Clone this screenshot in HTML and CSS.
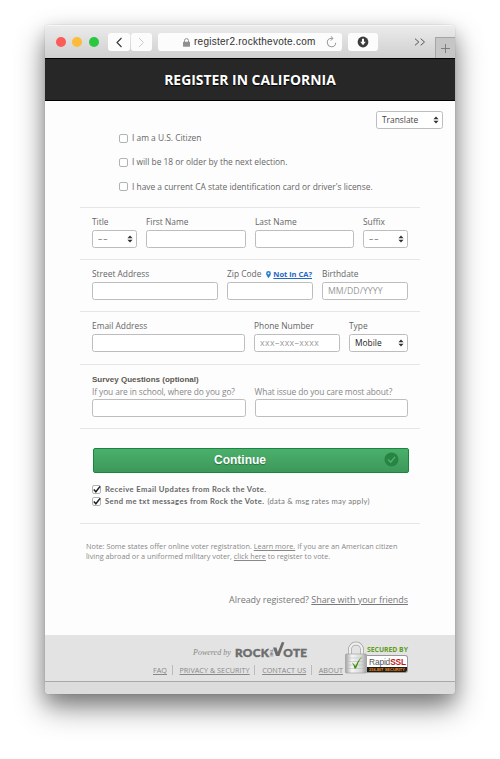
FILE: index.html
```html
<!DOCTYPE html>
<html lang="en">
<head>
<meta charset="utf-8">
<title>Register in California</title>
<link rel="stylesheet" href="styles.css">
</head>
<body>
<div class="window">
  <div class="toolbar">
    <div class="lights"><i class="red"></i><i class="yellow"></i><i class="green"></i></div>
    <div class="nav">
      <span><svg width="8" height="11" viewBox="0 0 8 11"><path d="M6.500 1 2 5.500 6.500 10" fill="none" stroke="#333" stroke-width="1.100"/></svg></span>
      <span><svg width="8" height="11" viewBox="0 0 8 11"><path d="M2 1 6.500 5.500 2 10" fill="none" stroke="#ccc" stroke-width="1"/></svg></span>
    </div>
    <div class="address">
      <svg class="lock" width="7" height="9" viewBox="0 0 7 9"><path d="M1.500 4V2.600a2 2 0 0 1 4 0V4" fill="none" stroke="#909090"/><rect y="3.700" width="7" height="5" rx=".6" fill="#909090"/></svg>
      <span class="url">register2.rockthevote.com</span>
      <svg class="reload" width="11" height="12" viewBox="0 0 11 12"><path d="M6.600 2.400H5.300a4.200 4.200 0 1 0 4.400 4.400M4.800.3 7 2.400 4.800 4.600" fill="none" stroke="#777" stroke-width=".8"/></svg>
    </div>
    <div class="download"><svg width="12" height="12" viewBox="0 0 12 12"><circle cx="6" cy="6" r="5.400" fill="#3c3c3c"/><path d="M5 2.800h2v3h1.700L6 9.200 3.300 5.800H5z" fill="#fff"/></svg></div>
    <svg class="more" width="12" height="8" viewBox="0 0 12 8"><path d="M1 .7 4.800 4 1 7.300M6.700.7 10.500 4 6.700 7.300" fill="none" stroke="#555" stroke-width="1"/></svg>
    <div class="newtab"><svg width="9" height="9" viewBox="0 0 9 9"><path d="M4.500 0v9M0 4.500h9" stroke="#777" stroke-width=".9"/></svg></div>
  </div>

  <header class="title">REGISTER IN CALIFORNIA</header>

  <main>
    <div class="translate"><div class="select"><span>Translate</span><svg class="arrows" viewBox="0 0 6 8"><path d="M3 .4 5.600 3.200H.4zM3 7.600.4 4.800h5.200z"/></svg></div></div>

    <section class="checks">
      <label><i class="box"></i><span>I am a U.S. Citizen</span></label>
      <label><i class="box"></i><span>I will be 18 or older by the next election.</span></label>
      <label><i class="box"></i><span>I have a current CA state identification card or driver's license.</span></label>
    </section>

    <section class="row names">
      <div><label>Title</label><div class="select"><span class="none">––</span><svg class="arrows" viewBox="0 0 6 8"><path d="M3 .4 5.600 3.200H.4zM3 7.600.4 4.800h5.200z"/></svg></div></div>
      <div><label>First Name</label><div class="field"></div></div>
      <div><label>Last Name</label><div class="field"></div></div>
      <div><label>Suffix</label><div class="select"><span class="none">––</span><svg class="arrows" viewBox="0 0 6 8"><path d="M3 .4 5.600 3.200H.4zM3 7.600.4 4.800h5.200z"/></svg></div></div>
    </section>

    <section class="row street">
      <div><label>Street Address</label><div class="field"></div></div>
      <div><label>Zip Code<a class="notin"><svg width="5" height="7" viewBox="0 0 5 7"><path d="M2.500 0a2.400 2.400 0 0 1 2.400 2.400C4.900 4.200 2.500 7 2.500 7S.1 4.200.1 2.400A2.400 2.400 0 0 1 2.500 0z" fill="#2080d0"/><circle cx="2.500" cy="2.400" r=".9" fill="#fff"/></svg><u>Not in CA?</u></a></label><div class="field"></div></div>
      <div><label>Birthdate</label><div class="field"><span class="ph">MM/DD/YYYY</span></div></div>
    </section>

    <section class="row email">
      <div><label>Email Address</label><div class="field"></div></div>
      <div><label>Phone Number</label><div class="field"><span class="ph phone">xxx–xxx–xxxx</span></div></div>
      <div><label>Type</label><div class="select"><span class="mobile">Mobile</span><svg class="arrows" viewBox="0 0 6 8"><path d="M3 .4 5.600 3.200H.4zM3 7.600.4 4.800h5.200z"/></svg></div></div>
    </section>

    <section class="survey">
      <h2>Survey Questions (optional)</h2>
      <div class="row">
        <div><label>If you are in school, where do you go?</label><div class="field"></div></div>
        <div><label>What issue do you care most about?</label><div class="field"></div></div>
      </div>
    </section>

    <section class="submit">
      <div class="continue"><span>Continue</span><svg width="15" height="15" viewBox="0 0 15 15"><circle cx="7.500" cy="7.500" r="7" fill="#278544"/><path d="M4 7.500 6.700 10.200 11 4.900" fill="none" stroke="#55b074" stroke-width="1.300"/></svg></div>
      <div class="opt"><i class="box"><svg viewBox="0 0 10 10"><path d="M2 5 4.300 7.600 9 1.500" fill="none" stroke="#222" stroke-width="1.700"/></svg></i><b>Receive Email Updates from Rock the Vote.</b></div>
      <div class="opt"><i class="box"><svg viewBox="0 0 10 10"><path d="M2 5 4.300 7.600 9 1.500" fill="none" stroke="#222" stroke-width="1.700"/></svg></i><b>Send me txt messages from Rock the Vote.</b><span class="rates">(data &amp; msg rates may apply)</span></div>
    </section>

    <p class="note">Note: Some states offer online voter registration. <u>Learn more.</u> If you are an American citizen<br>living abroad or a uniformed military voter, <u>click here</u> to register to vote.</p>
    <p class="already">Already registered? <u>Share with your friends</u></p>
  </main>

  <footer>
    <div class="links">
      <div class="powered"><em>Powered by</em><span class="logo"><b class="rock">ROCK</b><small>THE</small><svg width="12" height="16" viewBox="0 0 12 16"><path d="M0 5.500h3.400l1.400 4.500L8.800 0l2.600.5L6.400 14H3z" fill="#6c6c6c"/></svg><b class="ote">OTE</b></span></div>
      <nav><a>FAQ</a><a>PRIVACY &amp; SECURITY</a><a>CONTACT US</a><a>ABOUT</a></nav>
    </div>
    <div class="ssl">
      <svg class="padlock" width="22" height="33" viewBox="0 0 22 33">
        <defs><linearGradient id="metal"><stop offset="0" stop-color="#a4a4a4"/><stop offset=".3" stop-color="#f6f6f6"/><stop offset=".75" stop-color="#d8d8d8"/><stop offset="1" stop-color="#a0a0a0"/></linearGradient></defs>
        <path d="M5 14V8.500a6 6 0 0 1 12 0V14" fill="none" stroke="#a0a0a0" stroke-width="3.800"/>
        <path d="M5 14V8.500a6 6 0 0 1 12 0V14" fill="none" stroke="#eee" stroke-width="2.400"/>
        <rect x=".5" y="13" width="21" height="19" rx="1" fill="url(#metal)" stroke="#999" stroke-width=".6"/>
        <path d="M1 17h20M1 20.500h20M1 24h20M1 27.500h20" stroke="#b4b4b4" stroke-width=".5"/>
        <path d="M7 21.500q2.200 1 3.300 3.500 2.500-5.500 7-10-4.500 6.500-6.300 12.500H9.400Q9 24.500 7 21.500z" fill="#3f9210"/>
      </svg>
      <div class="seal"><b class="secured">SECURED BY</b><div class="badge"><div class="rapid">Rapid<b>SSL</b></div><div class="bits">256-BIT SECURITY</div></div></div>
    </div>
  </footer>
  <div class="status"></div>
</div>
</body>
</html>
```
FILE: styles.css
```css
* { box-sizing: border-box; }
html, body { height: 759px; overflow: hidden; }
body { margin: 0; padding: 25px 45px 0; background: #fff; font: 8.4px/10px "Open Sans", sans-serif; color: #666; }
i { display: block; font-style: normal; }
svg { display: block; flex: none; }
.window { width: 410px; height: 669px; border-radius: 4px; background: #fdfdfd; display: flex; flex-direction: column; box-shadow: 0 0 1px rgba(0,0,0,.35), 0 14px 30px rgba(0,0,0,.42), 0 8px 18px rgba(0,0,0,.22); white-space: nowrap; }

.toolbar { height: 33px; display: flex; align-items: center; border-radius: 4px 4px 0 0; background: linear-gradient(#ebebeb, #cfcfcf); border-top: 1px solid #f6f6f6; padding-left: 11px; }
.lights { display: flex; gap: 6.3px; width: 52px; }
.lights i { width: 10px; height: 10px; border-radius: 50%; }
.red { background: #fc5c57; }
.yellow { background: #fdbb3a; }
.green { background: #2ac840; }
.nav { display: flex; gap: 1px; width: 50px; }
.nav span, .address, .download { height: 18px; background: #fcfcfc; border-radius: 3px; display: flex; align-items: center; justify-content: center; }
.nav span { width: 21.5px; }
.address { width: 184px; justify-content: flex-start; padding-left: 25px; }
.url { font: 10px/18px "Liberation Sans", sans-serif; color: #333; width: 122px; margin-left: 4px; letter-spacing: .26px; }
.reload { margin-left: 10px; }
.download { width: 30px; margin-left: 6px; }
.more { margin-left: 36px; }
.newtab { margin-left: auto; align-self: flex-end; width: 20px; height: 21px; background: #c6c6c6; border: 1px solid #a6a6a6; border-width: 1px 0 0 1px; display: flex; align-items: center; justify-content: center; }

.title { height: 43px; background: #272727; border-top: 1px solid #000; border-bottom: 1px solid #000; color: #fff; font: bold 13.9px/42px "Open Sans", sans-serif; text-align: center; text-shadow: 0 1px 1px #000; }

main { height: 534px; padding: 10px 35px 0; }
.translate { display: flex; justify-content: flex-end; margin-right: -23px; }
.translate .select { width: 67px; color: #444; }
.select, .field { height: 18px; border: 1px solid #bdbdbd; border-radius: 2.5px; background: #fff; display: flex; align-items: center; }
.select { justify-content: space-between; padding: 0 3px 0 5px; }
.arrows { width: 6px; height: 8px; fill: #333; }
.none { letter-spacing: 1px; }
.box { width: 9px; height: 9px; border: 1px solid #aeb4b6; border-radius: 2px; background: #fff; }
.checks { height: 78px; padding: 4px 0 0 39px; }
.checks label { display: flex; align-items: center; gap: 4px; height: 10px; margin-bottom: 14.3px; }

.row { display: flex; gap: 9px; height: 52px; padding: 8px 12px 0; border-top: 1px solid #e6e6e6; }
.row label { display: flex; height: 12px; line-height: 12px; margin-bottom: 2px; }
.names > :nth-child(1), .names > :nth-child(4) { width: 45px; }
.names > :nth-child(2) { width: 100px; }
.names > :nth-child(3) { width: 99px; }
.street > :nth-child(1) { width: 126px; }
.street > :nth-child(2) { width: 86px; }
.street > :nth-child(3) { width: 86px; }
.email { height: 53px; }
.email > :nth-child(1) { width: 153px; }
.email > :nth-child(2) { width: 86px; }
.email > :nth-child(3) { width: 59px; }
.ph { color: #999; padding-left: 5px; font-size: 8.7px; letter-spacing: .05px; }
.phone { letter-spacing: .42px; }
.notin { display: flex; align-items: center; gap: 2px; margin-left: 5px; font: bold 7.5px/12px "Open Sans", sans-serif; color: #2467c4; }
.mobile { color: #222; }

.survey { height: 64px; border-top: 1px solid #e6e6e6; padding-top: 9px; }
.survey h2 { margin: 0 12px; font: bold 8px/12px "Liberation Sans", sans-serif; color: #5c584e; }
.survey .row { border: 0; padding-top: 0; height: 31px; }
.survey .row > div { width: 153.5px; }
.survey label { color: #888; height: 11px; letter-spacing: -.1px; }

.submit { height: 96px; border-top: 1px solid #e6e6e6; border-bottom: 1px solid #e6e6e6; padding: 19px 11px 0 12px; }
.continue { height: 25px; margin: 0 0 10px 1px; display: flex; align-items: center; justify-content: flex-end; padding-right: 9px; border: 1px solid #178642; border-radius: 2px; background: linear-gradient(#4bb06b, #3d985a); }
.continue span { font: bold 12px/23px "Liberation Sans", sans-serif; color: #fff; width: 53px; margin-right: 117px; text-shadow: 0 1px 1px #27703f; }
.continue svg { margin-top: -2px; }
.opt { display: flex; align-items: center; height: 12px; }
.opt .box { margin-right: 4px; }
.opt .box svg { width: 9px; height: 9px; margin: -1px 0 0 -1px; }
.opt b { font: bold 7.6px/12px Lato, sans-serif; letter-spacing: .4px; }
.rates { font: 7.6px/12px Lato, sans-serif; letter-spacing: .27px; margin-left: 3px; color: #777; }

.note { margin: 17px 6px 0; font: 7.3px/10px "Open Sans", sans-serif; color: #888; }
.already { margin: 33px 12px 0 0; text-align: right; font: 9px/12px "Open Sans", sans-serif; letter-spacing: -.04px; color: #777; }

footer { height: 46px; background: #e3e3e3; display: flex; }
.links { width: 300px; padding: 7px 0 0 108px; }
.powered { display: flex; align-items: center; height: 21px; padding-left: 40px; }
.powered em { font: italic 8px/12px "Liberation Serif", serif; color: #888; width: 42px; }
.logo { display: flex; align-items: center; color: #6c6c6c; }
.logo b { font: 900 11.8px/16px Lato, sans-serif; letter-spacing: .3px; -webkit-text-stroke: .4px #6c6c6c; }
.logo small { font: bold 4px/5px "Liberation Sans", sans-serif; writing-mode: vertical-rl; }
.logo .ote { margin-left: -2px; }
.logo svg { margin-top: -5px; margin-left: -1px; }
nav { display: flex; font: 7.2px/10px "Open Sans", sans-serif; letter-spacing: .05px; color: #888; text-decoration: underline; margin-top: 2px; }
nav a { height: 10px; }
nav a + a { border-left: 1px solid #bbb; padding-left: 7px; margin-left: 4.5px; }
.ssl { display: flex; padding-top: 6px; }
.seal { width: 41px; }
.secured { display: block; margin-top: 4px; font: bold 6.8px/10px "Open Sans", sans-serif; color: #5f9c22; }
.badge { height: 18px; border: 1px solid #999; border-left-width: 0; border-radius: 0 3px 3px 0; background: #fff; overflow: hidden; }
.rapid { font: 8.4px/12px "Liberation Sans", sans-serif; letter-spacing: -.15px; color: #555; height: 11px; padding-left: 2px; }
.rapid b { color: #c01722; }
.bits { font: bold 4px/5px "Liberation Sans", sans-serif; color: #e88a26; background: #221c14; height: 5px; text-align: center; }
.status { height: 13px; background: #dcdcdc; border-top: 1px solid #a9a9a9; border-radius: 0 0 4px 4px; }
```
